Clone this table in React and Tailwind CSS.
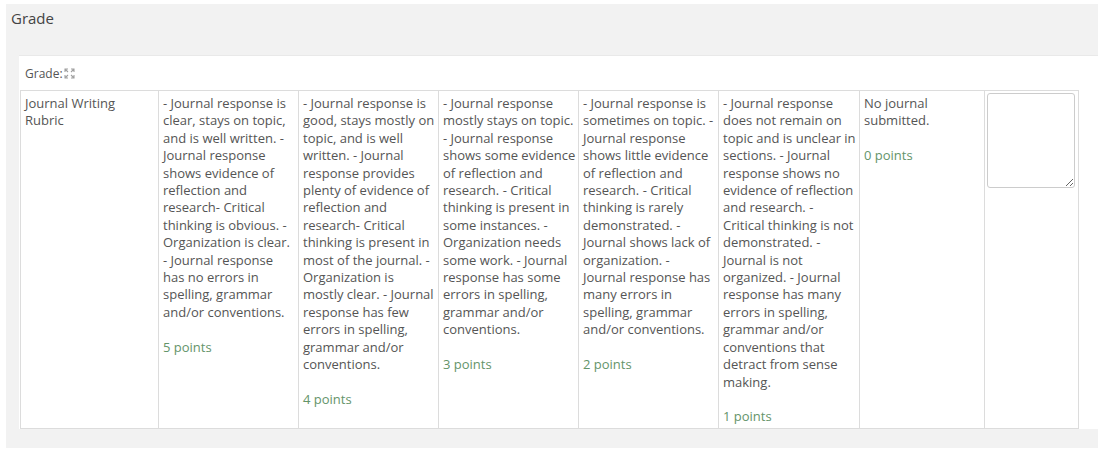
import React from "react";

const levels = [
  {
    text: "- Journal response is clear, stays on topic, and is well written. - Journal response shows evidence of reflection and research- Critical thinking is obvious. - Organization is clear. - Journal response has no errors in spelling, grammar and/or conventions.",
    points: 5,
  },
  {
    text: "- Journal response is good, stays mostly on topic, and is well written. - Journal response provides plenty of evidence of reflection and research- Critical thinking is present in most of the journal. - Organization is mostly clear. - Journal response has few errors in spelling, grammar and/or conventions.",
    points: 4,
  },
  {
    text: "- Journal response mostly stays on topic. - Journal response shows some evidence of reflection and research. - Critical thinking is present in some instances. - Organization needs some work. - Journal response has some errors in spelling, grammar and/or conventions.",
    points: 3,
  },
  {
    text: "- Journal response is sometimes on topic. - Journal response shows little evidence of reflection and research. - Critical thinking is rarely demonstrated. - Journal shows lack of organization. - Journal response has many errors in spelling, grammar and/or conventions.",
    points: 2,
  },
  {
    text: "- Journal response does not remain on topic and is unclear in sections. - Journal response shows no evidence of reflection and research. - Critical thinking is not demonstrated. - Journal is not organized. - Journal response has many errors in spelling, grammar and/or conventions that detract from sense making.",
    points: 1,
  },
  { text: "No journal submitted.", points: 0 },
];

const widths = ["w-[140px]", "w-[140px]", "w-[140px]", "w-[140px]", "w-[141px]", "w-[125px]"];

function ExpandIcon() {
  return (
    <svg width="11" height="11" viewBox="0 0 11 11" fill="none" stroke="#a0a0a0" strokeWidth="1.1" className="inline-block ml-[1px] -mt-[2px]">
      <path d="M1 4V1h3M1 1l3 3" />
      <path d="M7 1h3v3M10 1L7 4" />
      <path d="M1 7v3h3M1 10l3-3" />
      <path d="M10 7v3H7M10 10L7 7" />
    </svg>
  );
}

export default function App() {
  return (
    <div className="min-h-screen bg-white pl-[6px] pr-[12px] pt-[4px] font-['Open_Sans',sans-serif] text-[13px] leading-[17.4px] text-[#555]">
      <div className="bg-[#f2f2f2] pb-[19px]">
        <h3 className="h-[51px] px-[5px] pt-[4px] text-[15px] leading-[21px] text-[#444]">Grade</h3>
        <div className="ml-[13px] bg-white border-t border-[#e9e9e9]">
          <div className="h-[34px] pl-[6px] pt-[9px] text-[12px]">
            Grade:
            <ExpandIcon />
          </div>
          <table className="ml-[1px] w-[1058px] table-fixed border-collapse border border-[#dcdcdc]">
            <tbody>
              <tr>
                <td className="w-[138px] align-top border border-[#dcdcdc] px-[4px] pt-[4px] pb-[2px]">
                  Journal Writing Rubric
                </td>
                {levels.map((l, i) => (
                  <td key={i} className={`${widths[i]} align-top border border-[#dcdcdc] pl-[4px] pr-[2px] pt-[4px] pb-[2px]`}>
                    <div>{l.text}</div>
                    <div className="mt-[17.4px] text-[#64946a]">{l.points} points</div>
                  </td>
                ))}
                <td className="w-[94px] align-top border border-[#dcdcdc] pl-[2px] pt-[2px]">
                  <textarea className="block w-[88px] h-[95px] rounded-[3px] border border-[#ccc] bg-white" />
                </td>
              </tr>
            </tbody>
          </table>
        </div>
      </div>
    </div>
  );
}
